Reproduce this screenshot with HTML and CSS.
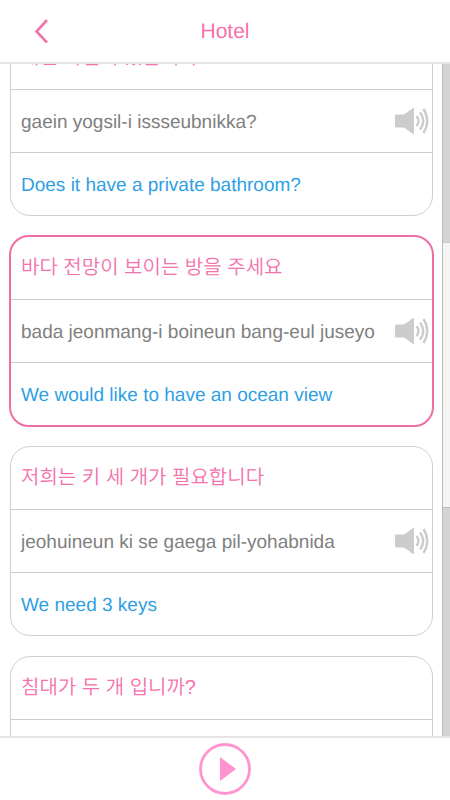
FILE: index.html
```html
<!DOCTYPE html>
<html lang="en">
<head>
    <meta charset="UTF-8">
    <meta name="viewport" content="width=device-width, initial-scale=1.0">
    <title>Hotel</title>
    <link rel="stylesheet" href="styles.css">
</head>
<body>
    <svg class="defs">
        <symbol id="speaker" viewBox="0 0 34 28">
            <path d="M0 8.500Q0 7.500 1 7.500H9L18 1H19V27H18L9 20.500H1Q0 20.500 0 19.500Z" fill="#ccc"/>
            <path d="M21.500 9Q25.500 14 21.500 19M25 5.500Q31.500 14 25 22.500M28.500 2Q36 14 28.500 26" fill="none" stroke="#ccc" stroke-width="2.400"/>
        </symbol>
    </svg>

    <header class="header">
        <a class="back" href="#" aria-label="Back">
            <svg width="14" height="24" viewBox="0 0 14 24">
                <path d="M13 1L2.500 12.500L13 23.500" fill="none" stroke="#f472ac" stroke-width="2.600"/>
            </svg>
        </a>
        <h1>Hotel</h1>
    </header>

    <main class="content">
        <div class="list" id="list">
            <section class="card">
                <p class="row korean" lang="ko">개인 욕실이 있습니까?</p>
                <div class="row">
                    <p class="roman">gaein yogsil-i issseubnikka?</p>
                    <button class="sound" aria-label="Listen"><svg><use href="#speaker"/></svg></button>
                </div>
                <p class="row english">Does it have a private bathroom?</p>
            </section>
            <section class="card active">
                <p class="row korean" lang="ko">바다 전망이 보이는 방을 주세요</p>
                <div class="row">
                    <p class="roman">bada jeonmang-i boineun bang-eul juseyo</p>
                    <button class="sound" aria-label="Listen"><svg><use href="#speaker"/></svg></button>
                </div>
                <p class="row english">We would like to have an ocean view</p>
            </section>
            <section class="card">
                <p class="row korean" lang="ko">저희는 키 세 개가 필요합니다</p>
                <div class="row">
                    <p class="roman">jeohuineun ki se gaega pil-yohabnida</p>
                    <button class="sound" aria-label="Listen"><svg><use href="#speaker"/></svg></button>
                </div>
                <p class="row english">We need 3 keys</p>
            </section>
            <section class="card">
                <p class="row korean" lang="ko">침대가 두 개 입니까?</p>
                <div class="row"></div>
                <p class="row english"></p>
            </section>
        </div>
        <div class="scrollbar">
            <div class="track-above"></div>
            <div class="thumb"></div>
            <div class="track-below"></div>
        </div>
    </main>

    <footer class="footer">
        <button class="play" aria-label="Play">
            <svg width="52" height="52" viewBox="0 0 52 52">
                <circle cx="26" cy="26" r="24.500" fill="none" stroke="#ff94d0" stroke-width="2.800"/>
                <path d="M21 14L37 26L21 38Z" fill="#ff94d0"/>
            </svg>
        </button>
    </footer>

    <script>
        document.getElementById('list').scrollTop = 48;
    </script>
</body>
</html>
```

FILE: styles.css
```css
* {
    box-sizing: border-box;
}

body {
    margin: 0;
    height: 100vh;
    display: flex;
    flex-direction: column;
    font-family: "Liberation Sans", Arial, sans-serif;
    font-size: 19px;
    line-height: 24px;
    color: #808080;
    background-color: #fff;
    text-rendering: geometricPrecision;
}

h1,
p {
    margin: 0;
}

button {
    padding: 0;
    border: none;
    background: none;
    cursor: pointer;
}

svg {
    display: block;
}

.defs {
    display: none;
}

.header {
    flex: none;
    height: 64px;
    display: grid;
    grid-template-columns: 1fr auto 1fr;
    align-items: center;
    padding: 0 34px;
    border-bottom: 2px solid #e4e4e4;
}

.header h1 {
    padding-top: 2px;
    font-size: 21px;
    font-weight: normal;
    color: #f472ac;
}

.back {
    justify-self: start;
}

.content {
    flex: 1;
    min-height: 0;
    display: flex;
}

.list {
    flex: 1;
    overflow: hidden;
    display: flex;
    flex-direction: column;
    gap: 20px;
    padding: 10px 9px 10px 10px;
}

.card {
    flex: none;
    border: 1px solid #d0d0d0;
    border-radius: 20px;
}

.card.active {
    margin: -1px;
    border: 2px solid #f06ea6;
}

.row {
    height: 63px;
    display: flex;
    align-items: center;
    justify-content: space-between;
    padding: 0 3px 0 10px;
    border-bottom: 1px solid #ccc;
}

.row:last-child {
    height: 62px;
    border-bottom: none;
}

.korean {
    font-family: "Liberation Sans", "Noto Sans CJK KR", sans-serif;
    font-weight: 350;
    font-size: 20px;
    color: #f472ac;
}

.roman,
.english {
    padding-top: 4px;
}

.english {
    color: #2f9fe3;
}

.sound svg {
    width: 34px;
    height: 28px;
}

.scrollbar {
    width: 8px;
    display: flex;
    flex-direction: column;
    background-color: #d4d4d4;
    border-left: 1px solid #bbb;
}

.track-above {
    flex: 179;
}

.thumb {
    flex: 266;
    background-color: #f5f5f5;
    border-top: 1px solid #ccc;
    border-bottom: 1px solid #bbb;
}

.track-below {
    flex: 229;
}

.footer {
    flex: none;
    height: 64px;
    display: flex;
    align-items: center;
    justify-content: center;
    border-top: 2px solid #e4e4e4;
}
```
